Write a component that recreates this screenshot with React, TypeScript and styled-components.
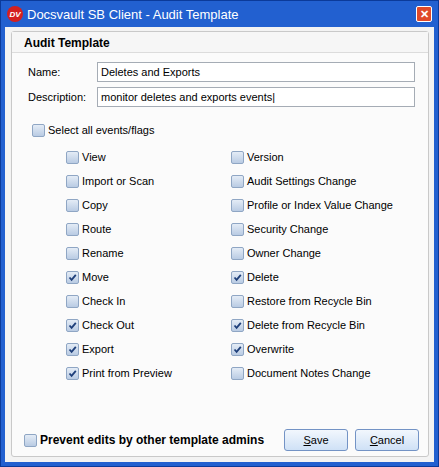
import React from "react";
import styled, { createGlobalStyle } from "styled-components";

const G = createGlobalStyle`
  html,body{margin:0;padding:0;background:#2a5cb0;}
  *{box-sizing:border-box;}
`;
const Win = styled.div`
  width:439px;height:467px;background:#2260d0;border:1px solid #0b3a9a;
  display:flex;flex-direction:column;font-family:"Liberation Sans",Arial,sans-serif;font-size:11px;color:#000;
  padding:0 4px 4px 4px;
`;
const Title = styled.div`
  height:26px;display:flex;align-items:center;gap:4px;color:#fff;font-size:13px;padding-left:2px;
`;
const Logo = styled.div`
  width:16px;height:16px;border-radius:50%;background:#d42020;color:#fff;font-size:8px;font-weight:bold;
  display:flex;align-items:center;justify-content:center;font-style:italic;
`;
const Close = styled.div`
  margin-left:auto;width:16px;height:16px;background:#e04a2a;border:1px solid #fff;border-radius:2px;color:#fff;
  font-size:11px;font-weight:bold;display:flex;align-items:center;justify-content:center;margin-right:2px;
`;
const Body = styled.div`
  flex:1;display:flex;padding:4px 5px 5px 6px;background:#f3f3f3;
`;
const Panel = styled.div`
  flex:1;background:#fbfbfb;border:1px solid #c9c9c9;border-radius:3px;display:flex;flex-direction:column;
`;
const Head = styled.div`
  height:21px;border-bottom:1px solid #dcdcdc;font-weight:bold;font-size:12px;padding:4px 0 0 12px;background:#f6f6f6;
`;
const Form = styled.div`padding:9px 13px 0 16px;display:flex;flex-direction:column;gap:5px;`;
const Row = styled.div`display:flex;align-items:center;height:20px;`;
const Label = styled.div`width:69px;font-size:11px;`;
const Input = styled.div`
  flex:1;height:20px;border:1px solid #a5acb5;background:#fff;padding:3px 3px;font-size:11px;
`;
const Box = styled.span`
  width:13px;height:13px;border:1px solid #8fa6c4;border-radius:2px;display:inline-flex;align-items:center;justify-content:center;
  background:linear-gradient(#e4ecf6,#b9cbe3);margin-right:3px;flex-shrink:0;
`;
const Check = styled.label<{ $bold?: boolean }>`
  display:flex;align-items:center;white-space:nowrap;font-size:${p => (p.$bold ? "12px" : "11px")};font-weight:${p => (p.$bold ? "bold" : "normal")};height:14px;
`;
const All = styled.div`padding:16px 0 0 20px;`;
const Grid = styled.div`
  display:grid;grid-template-columns:165px 180px;row-gap:10px;padding:13px 0 0 54px;
`;
const Foot = styled.div`margin-top:auto;display:flex;align-items:center;padding:0 9px 5px 12px;gap:7px;`;
const Spacer = styled.div`flex:1;`;
const Btn = styled.div`
  width:64px;height:22px;border:1px solid #7393c5;border-radius:3px;background:linear-gradient(#f2f7fd,#cfe1f6);
  display:flex;align-items:center;justify-content:center;font-size:11px;
`;

const Cb = ({ on, text, bold }: { on?: boolean; text: string; bold?: boolean }) => (
  <Check $bold={bold}>
    <Box>
      {on && (
        <svg width="9" height="9" viewBox="0 0 9 9">
          <path d="M1.5 4.5 L3.6 6.8 L7.8 1.8" stroke="#1e3f7a" strokeWidth="1.8" fill="none" />
        </svg>
      )}
    </Box>
    {text}
  </Check>
);

const items: [string, boolean, string, boolean][] = [
  ["View", false, "Version", false],
  ["Import or Scan", false, "Audit Settings Change", false],
  ["Copy", false, "Profile or Index Value Change", false],
  ["Route", false, "Security Change", false],
  ["Rename", false, "Owner Change", false],
  ["Move", true, "Delete", true],
  ["Check In", false, "Restore from Recycle Bin", false],
  ["Check Out", true, "Delete from Recycle Bin", true],
  ["Export", true, "Overwrite", true],
  ["Print from Preview", true, "Document Notes Change", false],
];

export default function App() {
  return (
    <>
      <G />
      <Win>
        <Title>
          <Logo>DV</Logo>Docsvault SB Client - Audit Template<Close>✕</Close>
        </Title>
        <Body>
          <Panel>
            <Head>Audit Template</Head>
            <Form>
              <Row><Label>Name:</Label><Input>Deletes and Exports</Input></Row>
              <Row><Label>Description:</Label><Input>monitor deletes and exports events|</Input></Row>
            </Form>
            <All><Cb text="Select all events/flags" /></All>
            <Grid>
              {items.map(([a, ao, b, bo]) => (
                <React.Fragment key={a}>
                  <Cb text={a} on={ao} />
                  <Cb text={b} on={bo} />
                </React.Fragment>
              ))}
            </Grid>
            <Foot>
              <Cb bold text="Prevent edits by other template admins" />
              <Spacer />
              <Btn><u>S</u>ave</Btn>
              <Btn><u>C</u>ancel</Btn>
            </Foot>
          </Panel>
        </Body>
      </Win>
    </>
  );
}
